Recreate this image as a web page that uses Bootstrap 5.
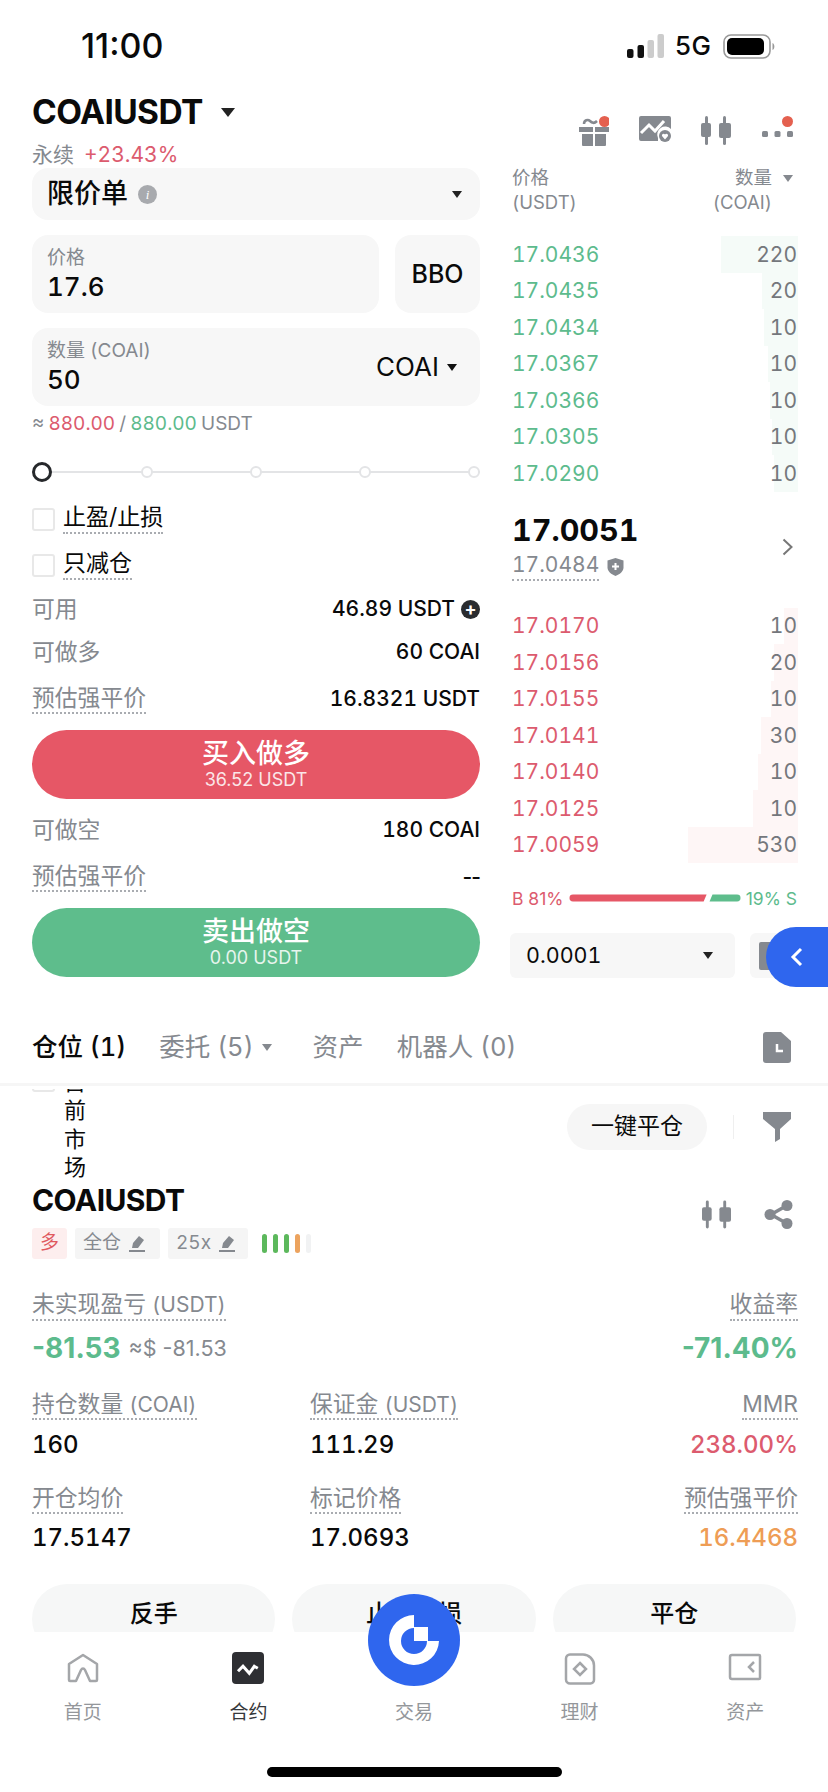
<!DOCTYPE html>
<html lang="zh">
<head>
  <meta charset="UTF-8" />
  <title>COAIUSDT</title>
  <link rel="stylesheet" href="https://cdn.jsdelivr.net/npm/bootstrap@5.3.3/dist/css/bootstrap.min.css">
  <style>
    :root { --up:#dc5b6e; --down:#5dbb8d; --muted:#85898f; --boxbg:#f7f7f7; --ink:#0a0a0a; }
    html, body { width:828px; height:1792px; overflow:hidden; }
    body { position:relative; background:#fff; color:var(--ink); font-family:Inter,"Noto Sans CJK SC",sans-serif; font-size:22px; line-height:1.2; font-variant-numeric:tabular-nums; }
    .up { color:var(--up); } .down { color:var(--down); } .dim { color:var(--muted); }
    .dotted { border-bottom:2px dotted #a9acb1; padding-bottom:1px; }
    .tri { display:inline-block; width:0; height:0; border-left:7px solid transparent; border-right:7px solid transparent; border-top:9px solid #222; }

    .statusbar { height:92px; padding:0 53px 0 81px; }
    .clock { font-size:34px; font-weight:500; font-variant-numeric:normal; }
    .fiveg { font-size:26px; font-weight:500; margin:0 12px 0 11px; }

    .pagehead { height:76px; padding:0 35px 0 32px; }
    .ticker { font-size:33.5px; font-weight:700; letter-spacing:-.6px; line-height:40px; }
    .subline { font-size:21px; line-height:26px; margin-top:10px; }
    .subline .up { margin-left:10px; }
    .headicons { gap:30px; margin-top:24px; }

    .leftcol { width:448px; margin-left:32px; }
    .rightcol { width:285px; margin-left:32px; }

    .box { background:var(--boxbg); border-radius:16px; }
    .selectbox { height:52px; padding:0 18px 0 15px; }
    .selectbox b { font-size:27px; font-weight:500; }
    .info { width:19px; height:19px; border-radius:50%; background:#a8aaae; color:#fff; font-size:13px; font-style:italic; font-family:"Liberation Serif",serif; line-height:19px; text-align:center; margin-left:10px; }
    .field { height:78px; padding:11px 15px; margin-top:15px; }
    .field small { display:block; font-size:19px; color:var(--muted); line-height:24px; }
    .field strong { display:block; font-size:26px; font-weight:500; line-height:33px; }
    .bbo { width:85px; font-size:25px; font-weight:500; }
    .coaisel { font-size:26px; padding-right:8px; }
    .approx { font-size:19px; margin-top:6px; line-height:24px; word-spacing:-1px; }

    .sliderbar { height:18px; margin-top:27px; }
    .sliderbar i { display:block; width:12px; height:12px; border:2px solid #e3e4e6; border-radius:50%; background:#fff; position:relative; }
    .sliderbar::before { content:""; position:absolute; left:0; right:0; top:8px; height:2px; background:#e3e4e6; }
    .sliderbar .knob { width:20px; height:20px; border:3px solid #26282b; margin-right:-8px; }

    .tick { width:23px; height:23px; border:2px solid #e8e8e8; border-radius:3px; margin-right:8px; flex:none; }
    .tickrow { font-size:23px; height:24px; }
    .inforow { font-size:22.8px; height:32px; }
    .inforow .val { font-size:21px; font-weight:500; }
    .dashes { font-variant-numeric:normal; letter-spacing:-1px; }
    .plusdot { display:inline-block; width:19px; height:19px; border-radius:50%; background:#2a2c2f; color:#fff; font-size:18px; line-height:17px; text-align:center; font-weight:700; margin-left:6px; vertical-align:1px; }

    .tradebtn { height:69px; width:100%; border:0; border-radius:35px; color:#fff; padding:0; display:block; }
    .tradebtn b { display:block; font-size:27px; font-weight:500; line-height:30px; margin-top:1px; }
    .tradebtn span { display:block; font-size:18px; line-height:22px; opacity:.85; }
    .buybtn, .buybtn:hover { background:#e65766; color:#fff; }
    .sellbtn, .sellbtn:hover { background:#5ebd8c; color:#fff; }

    .bookhead { height:60px; font-size:18.5px; line-height:25px; color:var(--muted); margin-top:-3px; padding-right:4px; }
    .bookrow { position:relative; height:36.5px; font-size:21px; display:flex; justify-content:space-between; align-items:center; }
    .bookrow span { position:relative; }
    .bookrow .qty { color:#74777c; }
    .depth { position:absolute; top:0; bottom:0; right:-1px; }
    .depth-a { background:#f5fbf8; } .depth-b { background:#fef6f6; }
    .midprice { font-size:30.5px; font-weight:700; line-height:36px; }
    .markprice { font-size:21px; color:#85898f; }
    .ratiorow { font-size:17.5px; height:18px; white-space:nowrap; font-variant-numeric:normal; }
    .precision { height:45px; width:225px; padding:0 22px 0 16px; font-size:21.5px; border-radius:6px; }
    .precision2 { height:45px; width:50px; margin-left:15px; padding-left:9px; border-radius:6px; }
    .graysq { width:28px; height:28px; background:#85898f; border-radius:2px; }

    .floattab { position:absolute; right:0; top:927px; width:62px; height:60px; background:#2f66ee; border-radius:30px 0 0 30px; padding-left:24px; }

    .tabbar { height:43px; padding:0 37px 0 32px; margin-top:48px; font-size:25.5px; }
    .tabbar .on { font-weight:500; }
    .tabgap { gap:33px; }
    .rule { height:3px; background:#f6f6f6; margin-top:14px; }

    .clipzone { height:97px; overflow:hidden; padding:0 37px 0 32px; border-top:3px solid #fff; }
    .vertlabel { width:24px; font-size:22px; line-height:28.5px; margin:-21.5px 0 0 9px; }
    .clipzone .tick { margin:-20px 0 0 0; }
    .pillbtn { width:140px; height:46px; background:#f6f6f6; border-radius:23px; font-size:23px; color:var(--ink); padding:0; border:0; }
    .vdiv { width:1px; height:24px; background:#efefef; margin:0 29px 0 26px; }

    .posblock { padding:0 30px 0 32px; }
    .posname { font-size:30px; font-weight:700; letter-spacing:-.6px; line-height:34px; }
    .tag { height:31px; font-size:19px; border-radius:3px; background:#f5f5f5; color:#868a90; padding:0 8px; }
    .tag-long { background:#fdeeee; color:#e0595f; width:35px; padding:0; }
    .lev { width:5px; height:19px; border-radius:3px; background:#5cb85c; }
    .lev-o { background:#eca35e; } .lev-x { background:#f1f2f3; }
    .metric { font-size:22.8px; color:var(--muted); line-height:26px; }
    .paren { font-size:21px; }
    .fiat { font-size:21.500px; font-variant-numeric:normal; }
    .num { font-size:24px; font-weight:500; line-height:30px; margin-top:12px; }
    .bignum { font-size:28px; font-weight:700; line-height:32px; font-variant-numeric:normal; }
    .statsgrid { display:grid; grid-template-columns:278px 1fr auto; margin-top:27px; }
    .gaprow { margin-top:25px; }
    .orange { color:#ee9d55; }
    .actbtn { flex:1; height:70px; background:#f6f7f7; border-radius:35px; border:0; font-size:24px; font-weight:500; color:var(--ink); padding:0 0 11px; }

    .tabnav { position:absolute; left:0; right:0; top:1632px; bottom:0; background:#fff; }
    .navcell { width:165.6px; padding-top:21px; }
    .navcell svg { display:block; margin:0 auto; }
    .navcell span { display:block; font-size:19px; color:#94979b; line-height:24px; position:absolute; top:69px; width:165.6px; }
    .navcell .cur { color:#36383b; }
    .homebar { position:absolute; left:267px; top:135px; width:295px; height:10px; border-radius:5px; background:#000; }
    .brand { position:absolute; left:368px; top:1594px; width:92px; height:92px; }
  </style>
</head>
<body>

  <!-- status bar -->
  <div class="statusbar d-flex justify-content-between align-items-center">
    <div class="clock">11:00</div>
    <div class="d-flex align-items-center">
      <svg width="37" height="24" viewBox="0 0 37 24"><rect x="0" y="15" width="6.500" height="9" rx="2" fill="#111"/><rect x="10.500" y="11" width="6.500" height="13" rx="2" fill="#111"/><rect x="20.500" y="6" width="6.500" height="18" rx="2" fill="#ccc"/><rect x="30.500" y="0" width="6.500" height="24" rx="2" fill="#ccc"/></svg>
      <span class="fiveg">5G</span>
      <svg width="52" height="25" viewBox="0 0 52 25"><rect x="1" y="1" width="46" height="23" rx="7" fill="none" stroke="#999" stroke-width="1.600"/><rect x="4" y="4" width="37" height="17" rx="5" fill="#000"/><path d="M49.500 9c2.500 1 2.500 6 0 7z" fill="#999"/></svg>
    </div>
  </div>

  <!-- symbol header -->
  <div class="pagehead d-flex justify-content-between">
    <div>
      <div class="d-flex align-items-center">
        <span class="ticker">COAIUSDT</span>
        <span class="tri" style="margin-left:18px"></span>
      </div>
      <div class="subline"><span class="dim">永续</span><span class="up">+23.43%</span></div>
    </div>
    <div class="d-flex headicons align-items-start">
      <svg width="30" height="30" viewBox="0 0 30 30"><path d="M5 8c0-4 4-5 6-3s4 3 7 0" fill="none" stroke="#85898f" stroke-width="2.500"/><path d="M0 11h14v5H0zM16 11h14v5H16zM3 18h11v12H4a1 1 0 0 1-1-1zM16 18h11v11a1 1 0 0 1-1 1H16z" fill="#85898f"/><circle cx="25.500" cy="5.500" r="5.500" fill="#e4604f"/></svg>
      <svg width="32" height="26" viewBox="0 0 32 26"><path d="M2 0h28a2 2 0 0 1 2 2v11a8 8 0 0 0-13 9v3H2a2 2 0 0 1-2-2V2a2 2 0 0 1 2-2z" fill="#85898f"/><path d="M2 17l8-8 6 6 9-10" fill="none" stroke="#fff" stroke-width="3"/><circle cx="26" cy="20" r="6" fill="#85898f"/><path d="M26 23.500l-3-3.500a1.700 1.700 0 0 1 3-1.500 1.700 1.700 0 0 1 3 1.500z" fill="#fff"/></svg>
      <svg width="30" height="29" viewBox="0 0 30 29"><g fill="#85898f"><rect x="4" y="0" width="3" height="29" rx="1.500"/><rect x="0" y="7" width="10" height="14" rx="2"/><rect x="22" y="0" width="3" height="29" rx="1.500"/><rect x="18" y="7" width="12" height="15" rx="2"/></g></svg>
      <svg width="31" height="24" viewBox="0 0 31 24" style="margin-left:1px"><circle cx="25.500" cy="5.500" r="5.500" fill="#e4604f"/><g fill="#85898f"><rect x="0" y="15" width="6" height="6" rx="1.500"/><rect x="12.500" y="15" width="6" height="6" rx="1.500"/><rect x="25" y="15" width="6" height="6" rx="1.500"/></g></svg>
    </div>
  </div>

  <div class="d-flex">
    <!-- order form -->
    <div class="leftcol">
      <div class="box selectbox d-flex align-items-center">
        <b>限价单</b><span class="info">i</span>
        <span class="tri ms-auto" style="border-width:7px 5.500px 0"></span>
      </div>
      <div class="d-flex gap-3">
        <div class="box field flex-grow-1"><small>价格</small><strong>17.6</strong></div>
        <div class="box field bbo d-flex align-items-center justify-content-center p-0">BBO</div>
      </div>
      <div class="box field d-flex justify-content-between align-items-center">
        <div><small>数量 (COAI)</small><strong>50</strong></div>
        <div class="coaisel d-flex align-items-center">COAI<span class="tri ms-2" style="border-width:7px 5.500px 0;border-top-color:#111"></span></div>
      </div>
      <div class="approx dim">≈ <span class="up">880.00</span> / <span class="down">880.00</span> USDT</div>
      <div class="sliderbar position-relative d-flex justify-content-between align-items-center">
        <i class="knob"></i><i></i><i></i><i></i><i></i>
      </div>
      <div class="tickrow d-flex align-items-center" style="margin-top:26px"><span class="tick"></span><span class="dotted">止盈/止损</span></div>
      <div class="tickrow d-flex align-items-center" style="margin-top:22px"><span class="tick"></span><span class="dotted">只减仓</span></div>
      <div class="inforow d-flex justify-content-between align-items-center" style="margin-top:16px"><span class="dim">可用</span><span class="val">46.89 USDT<span class="plusdot">+</span></span></div>
      <div class="inforow d-flex justify-content-between align-items-center" style="margin-top:11px"><span class="dim">可做多</span><span class="val">60 COAI</span></div>
      <div class="inforow d-flex justify-content-between align-items-center" style="margin-top:15px"><span class="dim dotted">预估强平价</span><span class="val">16.8321 USDT</span></div>
      <button class="btn tradebtn buybtn" style="margin-top:15px"><b>买入做多</b><span>36.52 USDT</span></button>
      <div class="inforow d-flex justify-content-between align-items-center" style="margin-top:15px"><span class="dim">可做空</span><span class="val">180 COAI</span></div>
      <div class="inforow d-flex justify-content-between align-items-center" style="margin-top:15px"><span class="dim dotted">预估强平价</span><span class="val dashes">--</span></div>
      <button class="btn tradebtn sellbtn" style="margin-top:15px"><b>卖出做空</b><span>0.00 USDT</span></button>
    </div>

    <!-- order book -->
    <div class="rightcol">
      <div class="bookhead d-flex justify-content-between">
        <div>价格<br>(USDT)</div>
        <div class="text-end">数量 <span class="tri" style="border-width:7px 5px 0;border-top-color:#85898f;margin-left:6px;vertical-align:2px"></span><br><span style="margin-right:21px">(COAI)</span></div>
      </div>
      <div style="margin-top:11px">
        <div class="bookrow"><div class="depth depth-a" style="width:77px"></div><span class="down">17.0436</span><span class="qty">220</span></div>
        <div class="bookrow"><div class="depth depth-a" style="width:36px"></div><span class="down">17.0435</span><span class="qty">20</span></div>
        <div class="bookrow"><div class="depth depth-a" style="width:34px"></div><span class="down">17.0434</span><span class="qty">10</span></div>
        <div class="bookrow"><div class="depth depth-a" style="width:30px"></div><span class="down">17.0367</span><span class="qty">10</span></div>
        <div class="bookrow"><div class="depth depth-a" style="width:28px"></div><span class="down">17.0366</span><span class="qty">10</span></div>
        <div class="bookrow"><div class="depth depth-a" style="width:26px"></div><span class="down">17.0305</span><span class="qty">10</span></div>
        <div class="bookrow"><div class="depth depth-a" style="width:24px"></div><span class="down">17.0290</span><span class="qty">10</span></div>
      </div>
      <div class="d-flex justify-content-between align-items-center" style="margin-top:19px;height:72px">
        <div>
          <div class="midprice">17.0051</div>
          <div class="d-flex align-items-center" style="margin-top:4px"><span class="markprice dotted">17.0484</span>
            <svg class="ms-2" width="17" height="18" viewBox="0 0 17 18"><path d="M8.500 0l8 2.500v7c0 4-4 7-8 8.500-4-1.500-8-4.500-8-8.500v-7z" fill="#85898f"/><path d="M8.500 5v7M5 8.500h7" stroke="#fff" stroke-width="2"/></svg>
          </div>
        </div>
        <svg width="11" height="18" viewBox="0 0 11 18" style="margin-right:4px"><path d="M1.500 1.500l8 7.500-8 7.500" fill="none" stroke="#777" stroke-width="2"/></svg>
      </div>
      <div style="margin-top:25px">
        <div class="bookrow"><div class="depth depth-b" style="width:14px"></div><span class="up">17.0170</span><span class="qty">10</span></div>
        <div class="bookrow"><div class="depth depth-b" style="width:24px"></div><span class="up">17.0156</span><span class="qty">20</span></div>
        <div class="bookrow"><div class="depth depth-b" style="width:27px"></div><span class="up">17.0155</span><span class="qty">10</span></div>
        <div class="bookrow"><div class="depth depth-b" style="width:37px"></div><span class="up">17.0141</span><span class="qty">30</span></div>
        <div class="bookrow"><div class="depth depth-b" style="width:40px"></div><span class="up">17.0140</span><span class="qty">10</span></div>
        <div class="bookrow"><div class="depth depth-b" style="width:45px"></div><span class="up">17.0125</span><span class="qty">10</span></div>
        <div class="bookrow"><div class="depth depth-b" style="width:110px"></div><span class="up">17.0059</span><span class="qty">530</span></div>
      </div>
      <div class="ratiorow d-flex align-items-center justify-content-between" style="margin-top:26px">
        <span class="up">B 81%</span>
        <svg width="172" height="10" viewBox="0 0 175 10"><path d="M4 1.500h136l-3 7H4a3.500 3.500 0 0 1 0-7z" fill="#e65766"/><path d="M146 1.500h25a3.500 3.500 0 0 1 0 7h-28z" fill="#5ebd8c"/></svg>
        <span class="down">19% S</span>
      </div>
      <div class="d-flex" style="margin-top:26px;margin-left:-2px;width:320px">
        <div class="box precision d-flex justify-content-between align-items-center">0.0001<span class="tri" style="border-width:7px 5.500px 0"></span></div>
        <div class="box precision2 d-flex align-items-center"><span class="graysq"></span></div>
      </div>
    </div>
  </div>

  <div class="floattab d-flex align-items-center">
    <svg width="13" height="20" viewBox="0 0 13 20"><path d="M11 2L3 10l8 8" fill="none" stroke="#fff" stroke-width="3"/></svg>
  </div>

  <!-- positions -->
  <div class="tabbar d-flex justify-content-between align-items-center">
    <div class="d-flex tabgap align-items-center">
      <span class="on">仓位 (1)</span>
      <span class="dim d-flex align-items-center">委托 (5)<span class="tri ms-2" style="border-width:7px 5px 0;border-top-color:#85898f"></span></span>
      <span class="dim" style="margin-left:8px">资产</span>
      <span class="dim">机器人 (0)</span>
    </div>
    <svg width="28" height="31" viewBox="0 0 28 31"><path d="M3 0h15l10 9v19a3 3 0 0 1-3 3H3a3 3 0 0 1-3-3V3a3 3 0 0 1 3-3z" fill="#85898f"/><path d="M14 12v7h6" fill="none" stroke="#fff" stroke-width="2.500"/></svg>
  </div>
  <div class="rule"></div>

  <div class="clipzone d-flex">
    <span class="tick"></span>
    <div class="vertlabel">目前市场</div>
    <div class="ms-auto d-flex align-items-center" style="height:75px">
      <button class="btn pillbtn">一键平仓</button>
      <span class="vdiv"></span>
      <svg width="28" height="30" viewBox="0 0 28 30"><path d="M0 0h28v7L17 17v10l-5 3V17L0 7z" fill="#85898f"/></svg>
    </div>
  </div>

  <div class="posblock">
    <div class="d-flex justify-content-between" style="height:47px">
      <div class="posname">COAIUSDT</div>
      <div class="d-flex" style="gap:33px;margin:17px 5px 0 0">
        <svg width="29" height="29" viewBox="0 0 30 29"><g fill="#85898f"><rect x="4" y="0" width="3" height="29" rx="1.500"/><rect x="0" y="7" width="10" height="14" rx="2"/><rect x="22" y="0" width="3" height="29" rx="1.500"/><rect x="18" y="7" width="12" height="15" rx="2"/></g></svg>
        <svg width="29" height="29" viewBox="0 0 29 29"><path d="M22 6L7 14.500 22 23" fill="none" stroke="#85898f" stroke-width="3.500"/><circle cx="23" cy="5.500" r="5.500" fill="#85898f"/><circle cx="6" cy="14.500" r="5.500" fill="#85898f"/><circle cx="23" cy="23.500" r="5.500" fill="#85898f"/></svg>
      </div>
    </div>
    <div class="d-flex align-items-center" style="gap:8px;margin-top:-2px">
      <span class="tag tag-long d-flex align-items-center justify-content-center">多</span>
      <span class="tag d-flex align-items-center" style="width:85px">全仓
        <svg class="ms-2" width="18" height="16" viewBox="0 0 18 16"><path d="M10 0l5 4-6 8H3l1-5zM0 14h16v2H0z" fill="#85898f"/></svg></span>
      <span class="tag d-flex align-items-center" style="width:80px">25x
        <svg class="ms-2" width="18" height="16" viewBox="0 0 18 16"><path d="M10 0l5 4-6 8H3l1-5zM0 14h16v2H0z" fill="#85898f"/></svg></span>
      <span class="d-flex" style="gap:6px;margin-left:6px"><i class="lev"></i><i class="lev"></i><i class="lev"></i><i class="lev lev-o"></i><i class="lev lev-x"></i></span>
    </div>

    <div class="d-flex justify-content-between" style="margin-top:32px">
      <span class="metric dotted">未实现盈亏 <span class="paren">(USDT)</span></span><span class="metric dotted">收益率</span>
    </div>
    <div class="d-flex justify-content-between align-items-center" style="margin-top:11px">
      <div class="d-flex align-items-center"><span class="bignum down">-81.53</span><span class="metric fiat ms-2">≈$ -81.53</span></div>
      <span class="bignum down">-71.40%</span>
    </div>

    <div class="statsgrid">
      <span class="metric"><span class="dotted">持仓数量 <span class="paren">(COAI)</span></span></span><span class="metric"><span class="dotted">保证金 <span class="paren">(USDT)</span></span></span><span class="metric text-end"><span class="dotted">MMR</span></span>
      <span class="num">160</span><span class="num">111.29</span><span class="num up text-end">238.00%</span>
      <span class="metric gaprow"><span class="dotted">开仓均价</span></span><span class="metric gaprow"><span class="dotted">标记价格</span></span><span class="metric text-end gaprow"><span class="dotted">预估强平价</span></span>
      <span class="num">17.5147</span><span class="num">17.0693</span><span class="num orange text-end">16.4468</span>
    </div>

    <div class="d-flex" style="gap:17px;margin-top:31px;margin-right:2px">
      <button class="btn actbtn">反手</button>
      <button class="btn actbtn">止盈止损</button>
      <button class="btn actbtn">平仓</button>
    </div>
  </div>

  <!-- bottom nav -->
  <nav class="tabnav d-flex text-center">
    <div class="navcell">
      <svg width="32" height="30" viewBox="0 0 32 30"><path d="M3 28a1 1 0 0 1-1-1V11L16 2l14 9v16a1 1 0 0 1-1 1h-6l-5-11c-1-2-3-2-4 0L9 28z" fill="none" stroke="#a4a6a9" stroke-width="2.500" stroke-linejoin="round"/></svg>
      <span>首页</span>
    </div>
    <div class="navcell">
      <svg width="32" height="32" viewBox="0 0 32 32" style="margin-top:-1px"><rect width="32" height="32" rx="4" fill="#2e2f33"/><path d="M6 19.300l5-5 6.300 7 5-7 3.500 2" fill="none" stroke="#fff" stroke-width="3"/></svg>
      <span class="cur">合约</span>
    </div>
    <div class="navcell"><span>交易</span></div>
    <div class="navcell">
      <svg width="32" height="32" viewBox="0 0 32 32"><path d="M6 1.500h13c6 0 11 5 11 11V27a3.500 3.500 0 0 1-3.500 3.500H6a4 4 0 0 1-4-4v-21a4 4 0 0 1 4-4z" fill="none" stroke="#a4a6a9" stroke-width="2.500"/><path d="M16 10l6 6-6 6-6-6z" fill="none" stroke="#a4a6a9" stroke-width="2.500"/></svg>
      <span>理财</span>
    </div>
    <div class="navcell">
      <svg width="34" height="28" viewBox="0 0 34 28"><path d="M4 2h27a1 1 0 0 1 1 1v22a1 1 0 0 1-1 1H4a2 2 0 0 1-2-2V4a2 2 0 0 1 2-2z" fill="none" stroke="#a4a6a9" stroke-width="2.500"/><path d="M26 9l-5 5 5 5" fill="none" stroke="#a4a6a9" stroke-width="2.500"/></svg>
      <span>资产</span>
    </div>
    <div class="homebar"></div>
  </nav>

  <svg class="brand" viewBox="0 0 92 92">
    <circle cx="46" cy="46" r="46" fill="#2f66ee"/>
    <path d="M46 21A25 25 0 1 0 71 47H59A13 13 0 1 1 46 34z" fill="#fff"/>
    <path d="M46 33h14v14H46z" fill="#fff"/>
  </svg>

  <script src="https://cdn.jsdelivr.net/npm/bootstrap@5.3.3/dist/js/bootstrap.bundle.min.js"></script>
</body>
</html>
